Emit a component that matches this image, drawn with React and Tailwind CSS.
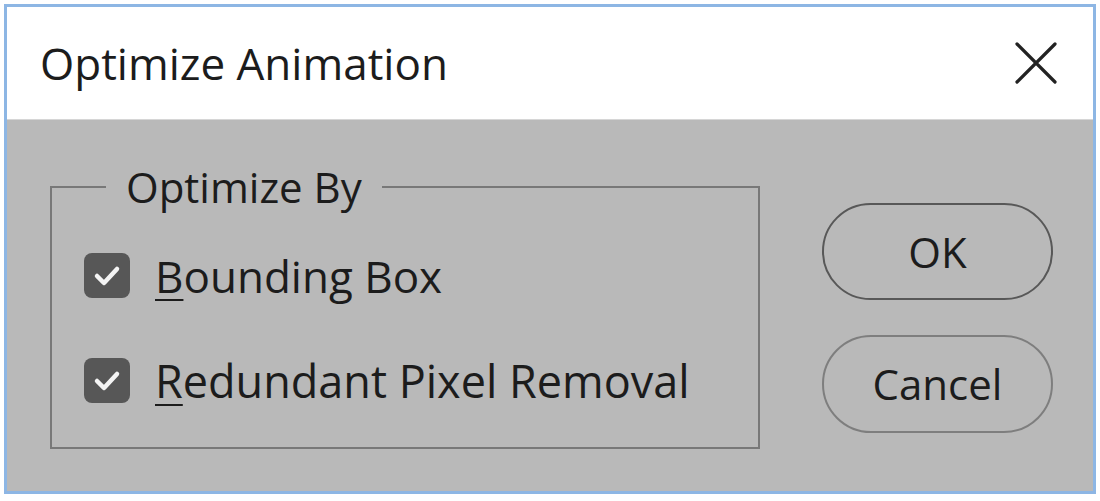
import React from 'react';

const font = { fontFamily: '"Open Sans", "Noto Sans", sans-serif' };

const CheckBox = () => (
  <div className="w-[46px] h-[45px] rounded-[8px] bg-[#575757] flex items-center justify-center shrink-0">
    <svg width="46" height="45" viewBox="0 0 46 45">
      <path d="M13 23 L20 30 L33 16" fill="none" stroke="#f4f4f4" strokeWidth="4.5" strokeLinecap="round" strokeLinejoin="round" />
    </svg>
  </div>
);

const Option = ({ mnemonic, rest, className, size }) => (
  <div className={`flex items-center gap-[25px] h-[45px] ${className}`}>
    <CheckBox />
    <span className={`${size} leading-none text-[#1c1c1c] whitespace-nowrap`}>
      <span className="underline decoration-2 underline-offset-[6px]">{mnemonic}</span>
      {rest}
    </span>
  </div>
);

const App = () => {
  return (
    <div className="w-[1100px] h-[501px] bg-white pt-[4px] pl-[4px]" style={font}>
      <div className="w-[1092px] h-[490px] border-[3px] border-[#8db6e4] flex flex-col">
        {/* title bar */}
        <div className="h-[113px] bg-white flex items-center justify-between pl-[33px] pr-[36px] border-b border-[#d6d6d6] shrink-0">
          <span className="text-[44px] text-[#1c1c1c] leading-none">Optimize Animation</span>
          <svg width="42" height="42" viewBox="0 0 42 42">
            <path d="M2 2 L40 40 M40 2 L2 40" stroke="#222" strokeWidth="3.2" strokeLinecap="round" />
          </svg>
        </div>

        {/* body */}
        <div className="flex-1 bg-[#b9b9b9] flex items-start pl-[43px] pt-[44px]">
          <fieldset className="w-[710px] h-[285px] border-2 border-[#787878] pl-[32px]">
            <legend className="ml-[22px] px-[20px] text-[42px] leading-[46px] text-[#1c1c1c]">Optimize By</legend>
            <Option mnemonic="B" rest="ounding Box" size="text-[44px]" className="mt-[43px]" />
            <Option mnemonic="R" rest="edundant Pixel Removal" size="text-[45px]" className="mt-[60px]" />
          </fieldset>

          <div className="flex flex-col ml-[62px] pt-[39px] gap-[35px]">
            <button className="w-[231px] h-[97px] rounded-full border-2 border-[#585858] text-[42px] text-[#1c1c1c] leading-none">
              OK
            </button>
            <button className="w-[231px] h-[98px] rounded-full border-2 border-[#7e7e7e] text-[42px] text-[#1c1c1c] leading-none">
              Cancel
            </button>
          </div>
        </div>
      </div>
    </div>
  );
};

export default App;
